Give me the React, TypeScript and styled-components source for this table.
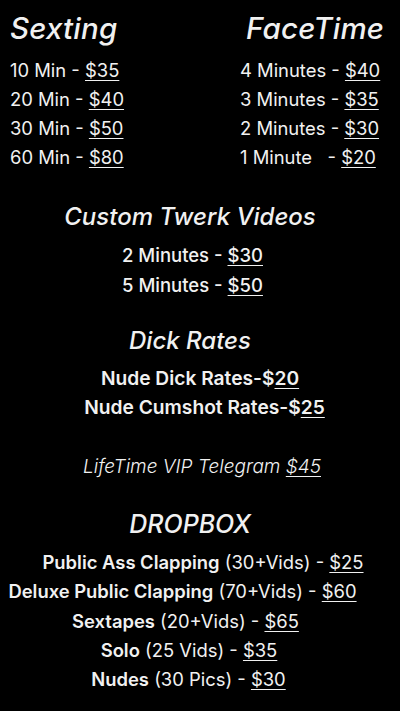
import styled, { createGlobalStyle } from "styled-components";

const GlobalStyle = createGlobalStyle`
    html, body {
        margin: 0;
        padding: 0;
        background: #000;
    }
    body {
        font-family: Inter, "Noto Sans", "Liberation Sans", sans-serif;
        color: #f1f1f1;
    }
`;

interface Price {
    label: string;
    price: string;
}

const sexting: Price[] = [
    { label: "10 Min - ", price: "$35" },
    { label: "20 Min - ", price: "$40" },
    { label: "30 Min - ", price: "$50" },
    { label: "60 Min - ", price: "$80" },
];

const facetime: Price[] = [
    { label: "4 Minutes - ", price: "$40" },
    { label: "3 Minutes - ", price: "$35" },
    { label: "2 Minutes - ", price: "$30" },
    { label: "1 Minute\u00a0\u00a0\u00a0- ", price: "$20" },
];

const twerk: Price[] = [
    { label: "2 Minutes - ", price: "$30" },
    { label: "5 Minutes - ", price: "$50" },
];

interface DropItem {
    name: string;
    count: string;
    price: string;
    nudge: number;
}

const dropbox: DropItem[] = [
    { name: "Public Ass Clapping", count: "(30+Vids)", price: "$25", nudge: 13 },
    { name: "Deluxe Public Clapping", count: "(70+Vids)", price: "$60", nudge: -7.5 },
    { name: "Sextapes", count: "(20+Vids)", price: "$65", nudge: -4.5 },
    { name: "Solo", count: "(25 Vids)", price: "$35", nudge: -1 },
    { name: "Nudes", count: "(30 Pics)", price: "$30", nudge: -1.5 },
];

const App = () => {
    return (
        <Page>
            <GlobalStyle />
            <TopGrid>
                <Column>
                    <BigHeading>Sexting</BigHeading>
                    <List>
                        {sexting.map((p) => (
                            <Line key={p.label}>
                                {p.label}
                                <Money>{p.price}</Money>
                            </Line>
                        ))}
                    </List>
                </Column>
                <Column>
                    <BigHeading $indent={6}>FaceTime</BigHeading>
                    <List>
                        {facetime.map((p) => (
                            <Line key={p.label}>
                                {p.label}
                                <Money>{p.price}</Money>
                            </Line>
                        ))}
                    </List>
                </Column>
            </TopGrid>

            <Section $top={29}>
                <Heading>Custom Twerk Videos</Heading>
                <CenterList>
                    {twerk.map((p) => (
                        <MediumLine key={p.label} $nudge={2.5} $height={30}>
                            {p.label}
                            <Money>{p.price}</Money>
                        </MediumLine>
                    ))}
                </CenterList>
            </Section>

            <Section $top={25}>
                <Heading>Dick Rates</Heading>
                <CenterList>
                    <BoldLine $nudge={10}>
                        Nude Dick Rates-$<Money>20</Money>
                    </BoldLine>
                    <BoldLine $nudge={14.5}>
                        Nude Cumshot Rates-$<Money>25</Money>
                    </BoldLine>
                </CenterList>
            </Section>

            <Telegram>
                LifeTime VIP Telegram <Money>$45</Money>
            </Telegram>

            <Section $top={27}>
                <Heading $size={25}>DROPBOX</Heading>
                <CenterList $gap={8}>
                    {dropbox.map((d) => (
                        <Line key={d.name} $nudge={d.nudge} $height={29.25}>
                            <Strong>{d.name}</Strong> {d.count} - <Money>{d.price}</Money>
                        </Line>
                    ))}
                </CenterList>
            </Section>
        </Page>
    );
};

export default App;

const Page = styled.div`
    width: 400px;
    min-height: 711px;
    box-sizing: border-box;
    padding: 10px 20px 20px 0;
    background: #000;
    display: flex;
    flex-direction: column;
`;

const TopGrid = styled.div`
    display: grid;
    grid-template-columns: 230px 1fr;
    padding-left: 10px;
`;

const Column = styled.div`
    display: flex;
    flex-direction: column;
    gap: 10px;
`;

const BigHeading = styled.h1<{ $indent?: number }>`
    margin: 0 0 0 ${(p) => p.$indent ?? 0}px;
    font-size: 29.5px;
    line-height: 36px;
    font-style: italic;
    font-weight: 500;
    letter-spacing: 0.2px;
    white-space: nowrap;
`;

const List = styled.div`
    display: flex;
    flex-direction: column;
`;

const Line = styled.div<{ $nudge?: number; $height?: number }>`
    font-size: 18.4px;
    line-height: ${(p) => p.$height ?? 29}px;
    font-weight: 400;
    white-space: nowrap;
    margin-left: ${(p) => (p.$nudge ?? 0) * 2}px;
`;

const MediumLine = styled(Line)`
    font-size: 18.5px;
    font-weight: 500;
`;

const BoldLine = styled(Line)`
    font-size: 19.2px;
    font-weight: 600;
`;

const Strong = styled.span`
    font-weight: 600;
`;

const Money = styled.span`
    text-decoration: underline;
    text-decoration-thickness: 1px;
    text-underline-offset: 3px;
`;

const Section = styled.div<{ $top: number }>`
    display: flex;
    flex-direction: column;
    align-items: center;
    margin-top: ${(p) => p.$top}px;
`;

const Heading = styled.h2<{ $size?: number }>`
    margin: 0;
    font-size: ${(p) => p.$size ?? 24}px;
    line-height: 32px;
    font-style: italic;
    font-weight: 500;
    white-space: nowrap;
`;

const CenterList = styled.div<{ $gap?: number }>`
    display: flex;
    flex-direction: column;
    align-items: center;
    margin-top: ${(p) => p.$gap ?? 7}px;
`;

const Telegram = styled.div`
    align-self: center;
    margin: 30px 0 0 24px;
    font-size: 19px;
    line-height: 29px;
    font-style: italic;
    font-weight: 300;
    white-space: nowrap;
`;
